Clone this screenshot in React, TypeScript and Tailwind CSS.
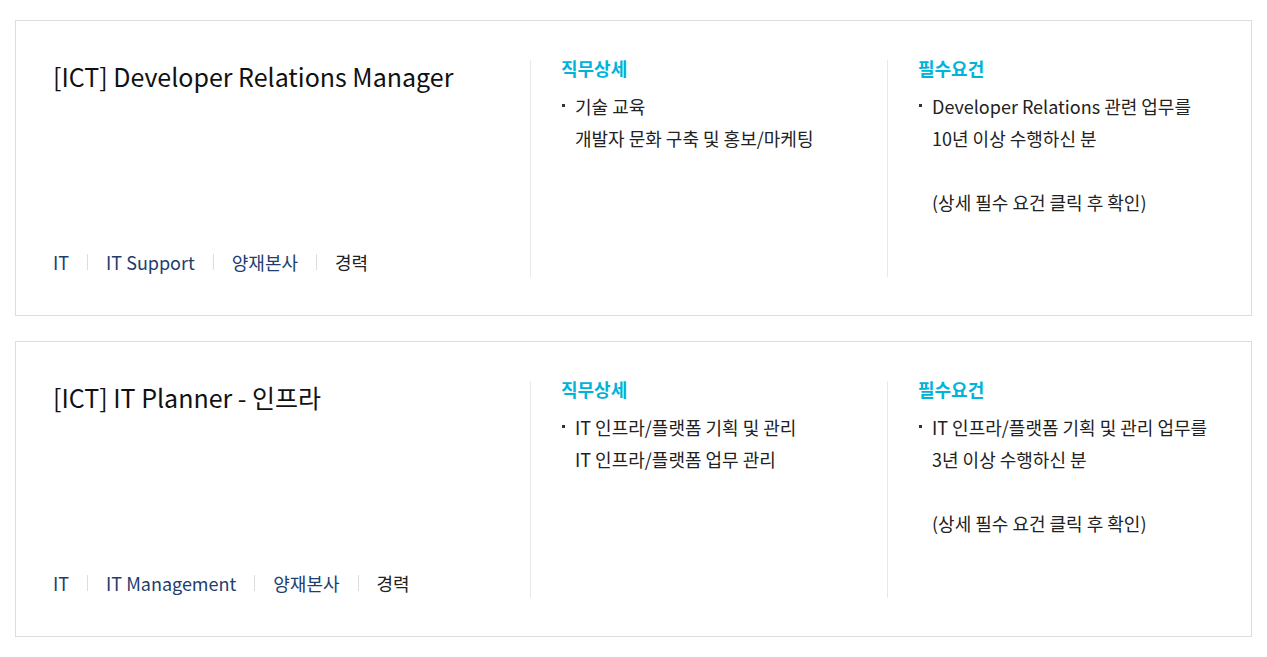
import React from "react";

type Job = {
  title: string;
  tags: string[];
  career: string;
  duties: string[];
  requirements: string[];
};

const jobs: Job[] = [
  {
    title: "[ICT] Developer Relations Manager",
    tags: ["IT", "IT Support", "양재본사"],
    career: "경력",
    duties: ["기술 교육", "개발자 문화 구축 및 홍보/마케팅"],
    requirements: [
      "Developer Relations 관련 업무를",
      "10년 이상 수행하신 분",
      "",
      "(상세 필수 요건 클릭 후 확인)",
    ],
  },
  {
    title: "[ICT] IT Planner - 인프라",
    tags: ["IT", "IT Management", "양재본사"],
    career: "경력",
    duties: ["IT 인프라/플랫폼 기획 및 관리", "IT 인프라/플랫폼 업무 관리"],
    requirements: [
      "IT 인프라/플랫폼 기획 및 관리 업무를",
      "3년 이상 수행하신 분",
      "",
      "(상세 필수 요건 클릭 후 확인)",
    ],
  },
];

function BulletBlock({ heading, lines }: { heading: string; lines: string[] }) {
  return (
    <div>
      <h3 className="-mt-[2px] text-[18px] leading-[20px] font-bold text-[#00b3d9]">{heading}</h3>
      <div className="relative mt-[12px] pl-[14px] text-[18px] leading-[32px] text-[#222]">
        <span className="absolute left-[1px] top-[14px] h-[3px] w-[3px] bg-[#333]" />
        {lines.map((l, i) => (
          <div key={i} className="h-[32px] whitespace-nowrap">
            {l}
          </div>
        ))}
      </div>
    </div>
  );
}

function JobCard({ job }: { job: Job }) {
  return (
    <div className="flex border border-[#dddddd] bg-white pt-[39px] pb-[38px] pl-[37px]">
      <div className="flex h-[217px] w-[477px] flex-col justify-between pr-4">
        <h2 className="-mt-[1px] text-[25px] leading-[34px] text-[#111]">{job.title}</h2>
        <div className="mb-[3px] flex items-center text-[18px] leading-[24px]">
          {job.tags.map((t) => (
            <React.Fragment key={t}>
              <span className="text-[#1d3e6e]">{t}</span>
              <span className="mx-[18px] h-[16px] w-px bg-[#dddddd]" />
            </React.Fragment>
          ))}
          <span className="text-[#222]">{job.career}</span>
        </div>
      </div>
      <div className="h-[217px] w-[357px] border-l border-[#e8e8e8] pl-[30px]">
        <BulletBlock heading="직무상세" lines={job.duties} />
      </div>
      <div className="h-[217px] flex-1 border-l border-[#e8e8e8] pl-[30px]">
        <BulletBlock heading="필수요건" lines={job.requirements} />
      </div>
    </div>
  );
}

export default function App() {
  return (
    <div
      className="min-h-[657px] bg-white px-[15px] pt-[20px]"
      style={{ fontFamily: '"Noto Sans CJK KR", "Noto Sans", sans-serif' }}
    >
      <div className="flex flex-col gap-[25px]">
        {jobs.map((j) => (
          <JobCard key={j.title} job={j} />
        ))}
      </div>
    </div>
  );
}
